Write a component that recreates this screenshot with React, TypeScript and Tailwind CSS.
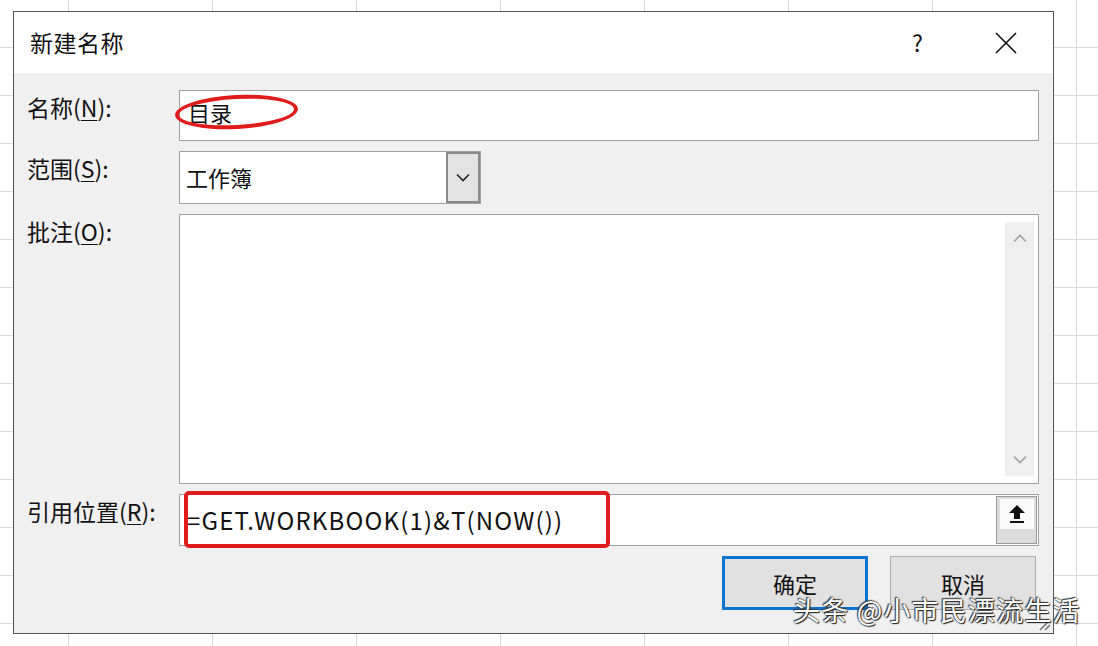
import React from "react";

const FONT = "font-['Microsoft_YaHei','Noto_Sans_CJK_SC',sans-serif]";

function Label({ text, k }: { text: string; k: string }) {
  return (
    <div className="w-[152px] shrink-0 pt-[2px] text-[23px] leading-[30px] text-[#111]">
      {text}(<span className="underline underline-offset-[3px] decoration-1">{k}</span>):
    </div>
  );
}

function Chevron({ dir, className }: { dir: "up" | "down"; className?: string }) {
  return (
    <svg width="14" height="9" viewBox="0 0 14 9" className={className}>
      <path
        d={dir === "down" ? "M1 1.5 L7 7.5 L13 1.5" : "M1 7.5 L7 1.5 L13 7.5"}
        fill="none"
        stroke="currentColor"
        strokeWidth="1.6"
      />
    </svg>
  );
}

export default function App() {
  return (
    <div
      className={`relative w-[1098px] h-[646px] overflow-hidden bg-white ${FONT} bg-[linear-gradient(to_right,#d6d6d6_1px,transparent_1px),linear-gradient(to_bottom,#d9d9d9_1px,transparent_1px)] bg-[length:144px_48px] bg-[position:68px_47px]`}
    >
      {/* dialog window */}
      <div className="absolute left-[13px] top-[11px] w-[1041px] h-[623px] border border-[#555] bg-[#f0f0f0] flex flex-col">
        {/* title bar */}
        <div className="h-[61px] bg-white flex items-center pl-[16px] shrink-0">
          <span className="text-[23px] text-[#111] tracking-[0.5px]">新建名称</span>
          <span className="ml-auto text-[23px] text-[#111] mr-[72px]">?</span>
          <svg width="22" height="22" viewBox="0 0 22 22" className="mr-[36px]">
            <path d="M1 1 L21 21 M21 1 L1 21" stroke="#111" strokeWidth="1.6" />
          </svg>
        </div>

        {/* body */}
        <div className="flex-1 flex flex-col gap-[10px] pl-[13px] pr-[14px] pt-[17px]">
          {/* name */}
          <div className="flex">
            <Label text="名称" k="N" />
            <div className="relative flex-1 h-[51px] bg-white border border-[#a0a0a0] flex items-center pl-[8px]">
              <span className="text-[22px] text-[#111] -mt-[6px]">目录</span>
              <div className="absolute left-[-5px] top-[4px] w-[123px] h-[34px] rounded-[50%] border-[4px] border-[#e01b1b] -rotate-[3deg]" />
            </div>
          </div>

          {/* scope */}
          <div className="flex">
            <Label text="范围" k="S" />
            <div className="w-[302px] h-[53px] bg-white border border-[#a0a0a0] flex items-center">
              <span className="flex-1 pl-[6px] text-[22px] text-[#111]">工作簿</span>
              <div className="w-[34px] h-full bg-[#e3e3e3] border-[2px] border-[#8a8a8a] flex items-center justify-center text-[#222]">
                <Chevron dir="down" />
              </div>
            </div>
          </div>

          {/* comment */}
          <div className="flex">
            <Label text="批注" k="O" />
            <div className="flex-1 h-[270px] bg-white border border-[#a0a0a0] flex justify-end py-[7px] pr-[4px]">
              <div className="w-[29px] bg-[#efeff0] flex flex-col items-center justify-between py-[12px] text-[#a3a3a3]">
                <Chevron dir="up" />
                <Chevron dir="down" />
              </div>
            </div>
          </div>

          {/* refers to */}
          <div className="flex">
            <Label text="引用位置" k="R" />
            <div className="relative flex-1 h-[52px] bg-white border border-[#a0a0a0] flex items-center">
              <span className="flex-1 pl-[7px] text-[24px] text-[#111] tracking-[1.2px]">
                =GET.WORKBOOK(1)&amp;T(NOW())
              </span>
              <div className="w-[41px] h-[48px] mr-[1px] bg-[#dcdcdc] border border-[#9a9a9a] flex flex-col items-center">
                <div className="w-[34px] h-[30px] mt-[2px] bg-[#fafafa] flex items-center justify-center">
                  <svg width="18" height="20" viewBox="0 0 18 20">
                    <path d="M9 1 L17 9 L12 9 L12 15 L6 15 L6 9 L1 9 Z" fill="#111" />
                    <rect x="2" y="17" width="14" height="2" fill="#111" />
                  </svg>
                </div>
              </div>
              <div className="absolute left-[4px] top-[-4px] w-[426px] h-[57px] rounded-[5px] border-[4px] border-[#e01b1b]" />
            </div>
          </div>

          {/* buttons */}
          <div className="flex justify-end gap-[22px] pr-[3px]">
            <button className="w-[146px] h-[54px] bg-[#e1e1e1] border-[3px] border-[#0a74d2] text-[22px] text-[#111]">
              确定
            </button>
            <button className="w-[146px] h-[54px] bg-[#e1e1e1] border border-[#adadad] text-[22px] text-[#111]">
              取消
            </button>
          </div>
        </div>

        {/* resize grip */}
        <svg width="14" height="14" viewBox="0 0 14 14" className="absolute right-[2px] bottom-[2px]">
          <path d="M13 3 L3 13 M13 8 L8 13" stroke="#777" strokeWidth="1.5" />
        </svg>
      </div>

      {/* watermark */}
      <div className="absolute left-[793px] top-[592px] text-[27px] leading-[36px] text-white tracking-[1.2px] [text-shadow:0_0_2px_#222,1px_1px_1px_#222,-1px_-1px_1px_#444]">
        头条 @小市民漂流生活
      </div>
    </div>
  );
}
